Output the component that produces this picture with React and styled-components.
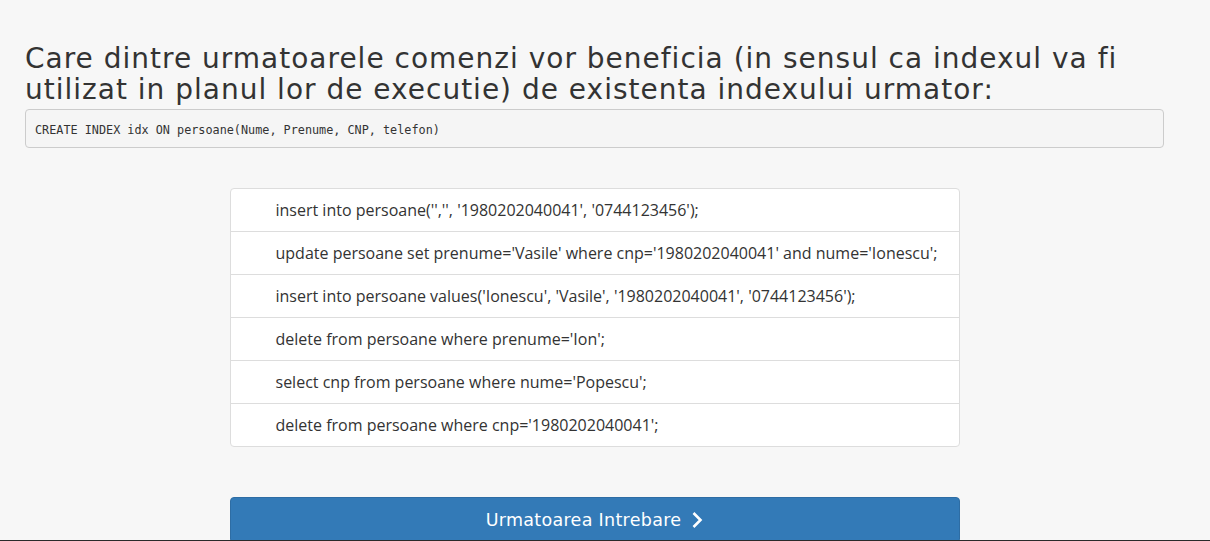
import React from 'react';
import styled, { createGlobalStyle } from 'styled-components';

const GlobalStyle = createGlobalStyle`
  html, body {
    margin: 0;
    padding: 0;
    background: #f7f7f7;
    height: 100%;
    overflow: hidden;
  }
  * {
    box-sizing: border-box;
  }
`;

const answers = [
  "insert into persoane('','', '1980202040041', '0744123456');",
  "update persoane set prenume='Vasile' where cnp='1980202040041' and nume='Ionescu';",
  "insert into persoane values('Ionescu', 'Vasile', '1980202040041', '0744123456');",
  "delete from persoane where prenume='Ion';",
  "select cnp from persoane where nume='Popescu';",
  "delete from persoane where cnp='1980202040041';",
];

const App = () => {
  return (
    <>
      <GlobalStyle />
      <Page>
        <Question>
          Care dintre urmatoarele comenzi vor beneficia (in sensul ca indexul va fi
          <br />
          utilizat in planul lor de executie) de existenta indexului urmator:
        </Question>
        <CodeBox>CREATE INDEX idx ON persoane(Nume, Prenume, CNP, telefon)</CodeBox>

        <AnswerList>
          {answers.map((a, i) => (
            <AnswerItem key={i}>{a}</AnswerItem>
          ))}
        </AnswerList>

        <NextButton type="button">
          Urmatoarea Intrebare
          <Chevron viewBox="0 0 12 18" width="12" height="18">
            <path d="M2.5 2 L9.5 9 L2.5 16" fill="none" stroke="#fff" strokeWidth="2.6" />
          </Chevron>
        </NextButton>
      </Page>
      <BottomEdge />
    </>
  );
};

export default App;

const Page = styled.div`
  padding: 43px 46px 0 25px;
  display: flex;
  flex-direction: column;
  align-items: center;
`;

const Question = styled.h3`
  align-self: stretch;
  margin: 0 0 4px;
  font-family: "DejaVu Sans", sans-serif;
  font-weight: 400;
  font-size: 28px;
  line-height: 31px;
  letter-spacing: 1px;
  white-space: nowrap;
  color: #333;
`;

const CodeBox = styled.pre`
  align-self: stretch;
  margin: 0;
  padding: 13px 9px 10px;
  height: 39px;
  font-family: "DejaVu Sans Mono", "Liberation Mono", monospace;
  font-size: 11.8px;
  line-height: 14px;
  color: #333;
  background: #f5f5f5;
  border: 1px solid #ccc;
  border-radius: 4px;
`;

const AnswerList = styled.div`
  width: 730px;
  margin-top: 40px;
  display: flex;
  flex-direction: column;
  background: #fff;
  border: 1px solid #ddd;
  border-radius: 4px;
`;

const AnswerItem = styled.div`
  padding: 10px 15px 10px 45px;
  font-family: "Open Sans", sans-serif;
  font-size: 16px;
  line-height: 22px;
  color: #333;
  border-top: 1px solid #ddd;

  &:first-child {
    border-top: none;
  }
`;

const NextButton = styled.button`
  width: 730px;
  height: 46px;
  margin-top: 50px;
  display: flex;
  align-items: center;
  justify-content: center;
  gap: 10px;
  font-family: "DejaVu Sans", sans-serif;
  font-weight: 500;
  font-size: 17.5px;
  letter-spacing: 0.3px;
  color: #fff;
  background: #337ab7;
  border: 1px solid #2e6da4;
  border-radius: 4px;
  cursor: pointer;
`;

const Chevron = styled.svg`
  display: block;
`;

const BottomEdge = styled.div`
  position: fixed;
  left: 0;
  right: 0;
  bottom: 0;
  height: 1px;
  background: #2a2a2a;
`;
